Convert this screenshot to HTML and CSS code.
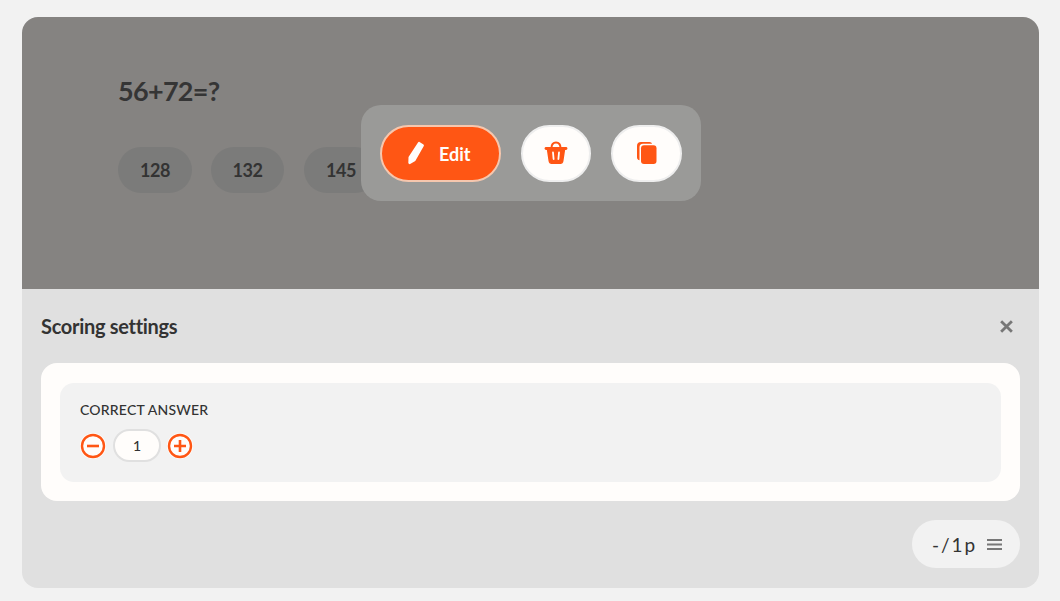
FILE: index.html
```html
<!DOCTYPE html>
<html lang="en">
<head>
    <meta charset="UTF-8">
    <title>Scoring settings</title>
    <link rel="stylesheet" href="styles.css">
</head>
<body>

    <div class="card">
        <div class="preview">
            <h1 class="question">56+72=?</h1>
            <div class="answers">
                <span class="answer a1">128</span>
                <span class="answer a2">132</span>
                <span class="answer a3">145</span>
            </div>

            <div class="toolbar">
                <button class="btn-edit">
                    <svg width="18" height="24" viewBox="0 0 18 24"><path d="M12.500 1l4 2.600c.5.400.6.900.3 1.400L8.300 20 2.700 23.200 1.300 22.300 1.500 16 11 1.500c.4-.6 1-.8 1.500-.5Z" fill="#fffdfb"/></svg>
                    <span>Edit</span>
                </button>
                <button class="btn-round">
                    <svg width="24" height="24" viewBox="0 0 24 24" fill="none" stroke="#ff5614" stroke-linecap="round" stroke-linejoin="round"><path d="M2 7.500h20" stroke-width="2.800"/><path d="M7.500 7c0-3.500 1.800-5.500 4.500-5.500S16.500 3.500 16.500 7" stroke-width="2"/><path d="M3.500 8l1.800 12c.2 1.400 1.100 2.200 2.300 2.200h8.800c1.200 0 2.100-.8 2.300-2.200L20.500 8Z" fill="#ff5614" stroke-width="1.600"/><path d="M9 11.500l.6 6.500M15 11.500l-.6 6.500" stroke="#fffdfb" stroke-width="1.800"/></svg>
                </button>
                <button class="btn-round">
                    <svg width="24" height="24" viewBox="0 0 24 24"><path d="M6 1h8.500c1.200 0 2.200.7 2.500 1.800H8c-2.300 0-3.500 1.200-3.500 3.500v13c-1.500-.3-2.500-1.300-2.500-3V5c0-2.600 1.400-4 4-4Z" fill="#ff5614"/><rect x="6" y="4.300" width="15.500" height="18.700" rx="3" fill="#ff5614"/></svg>
                </button>
            </div>
        </div>

        <div class="settings">
            <div class="settings-head">
                <h2>Scoring settings</h2>
                <svg class="close" width="15" height="15" viewBox="0 0 14 14"><path d="M2 2l10 10M12 2L2 12" stroke="#777" stroke-width="2.600"/></svg>
            </div>

            <div class="white-box">
                <div class="score-row">
                    <div class="score-label">CORRECT ANSWER</div>
                    <div class="stepper">
                        <span class="step">
                            <svg width="26" height="26" viewBox="0 0 26 26" fill="none" stroke="#ff5614" stroke-width="2.400"><circle cx="13" cy="13" r="11"/><path d="M7 13h12" stroke-width="2.600"/></svg>
                        </span>
                        <span class="count">1</span>
                        <span class="step step-plus">
                            <svg width="26" height="26" viewBox="0 0 26 26" fill="none" stroke="#ff5614" stroke-width="2.400"><circle cx="13" cy="13" r="11"/><path d="M7 13h12M13 7v12" stroke-width="2.600"/></svg>
                        </span>
                    </div>
                </div>
            </div>

            <div class="settings-foot">
                <div class="points">
                    <span class="points-text">- / 1 p</span>
                    <svg width="15" height="13" viewBox="0 0 15 13"><path d="M0 2h15M0 6.500h15M0 11h15" stroke="#777" stroke-width="2.200"/></svg>
                </div>
            </div>
        </div>
    </div>

</body>
</html>
```

FILE: styles.css
```css
* {
    box-sizing: border-box;
}
body {
    margin: 0;
    padding: 17px 21px 13px 22px;
    height: 601px;
    overflow: hidden;
    background-color: #f2f2f2;
    font-family: Lato, sans-serif;
    color: #333;
}
.card {
    height: 571px;
    border-radius: 16px;
    overflow: hidden;
    display: flex;
    flex-direction: column;
}
.preview {
    position: relative;
    height: 272px;
    padding: 57px 96px 0;
    background-color: #858381;
}
.question {
    margin: 0;
    font-size: 27px;
    line-height: 34px;
    font-weight: 700;
    letter-spacing: -0.7px;
    color: #353535;
}
.answers {
    display: flex;
    gap: 19px;
    margin-top: 39px;
}
.answer {
    display: flex;
    align-items: center;
    justify-content: center;
    height: 46px;
    border-radius: 23px;
    background-color: #7b7b7a;
    font-size: 18px;
    font-weight: 700;
    letter-spacing: -0.5px;
    color: #333;
}
.a1 {
    width: 74px;
}
.a2 {
    width: 73px;
}
.a3 {
    width: 74px;
    margin-left: 1px;
}
.toolbar {
    position: absolute;
    left: 339px;
    top: 88px;
    width: 340px;
    height: 96px;
    display: flex;
    align-items: center;
    padding: 0 19px;
    border-radius: 20px;
    background-color: #9a9a98;
}
.btn-edit {
    display: flex;
    align-items: center;
    gap: 14px;
    width: 121px;
    height: 57px;
    padding: 2px 0 0 25px;
    border: 2px solid #f6c7ae;
    border-radius: 29px;
    background-color: #ff5614;
    color: #fffdfb;
    font-family: Lato, sans-serif;
    font-size: 18px;
    font-weight: 700;
}
.btn-edit svg {
    margin-top: -2px;
}
.btn-round {
    display: flex;
    align-items: center;
    justify-content: center;
    width: 71px;
    height: 57px;
    margin-left: 20px;
    padding: 0;
    border: 2px solid #eee;
    border-radius: 29px;
    background-color: #fffdfb;
}
.settings {
    flex: 1;
    padding: 0 19px;
    background-color: #e0e0e0;
}
.settings-head {
    display: flex;
    align-items: center;
    justify-content: space-between;
    height: 74px;
}
.settings-head h2 {
    margin: 0;
    font-size: 20px;
    font-weight: 700;
    letter-spacing: -0.3px;
    color: #333;
}
.close {
    margin-right: 6px;
}
.white-box {
    padding: 20px 19px 19px;
    border-radius: 16px;
    background-color: #fffdfb;
}
.score-row {
    height: 99px;
    padding: 18px 20px 0;
    border-radius: 14px;
    background-color: #f2f2f2;
}
.score-label {
    font-size: 14px;
    line-height: 17px;
    font-weight: 500;
    letter-spacing: 0.2px;
    color: #333;
}
.stepper {
    display: flex;
    align-items: center;
    margin-top: 11px;
    margin-left: 1px;
    gap: 8px;
}
.step {
    display: flex;
    width: 26px;
    height: 26px;
    border-radius: 50%;
    background-color: #fffdfb;
    margin-right: -1px;
    margin-left: -1px;
}
.step-plus {
    margin-left: -2px;
}
.count {
    display: flex;
    align-items: center;
    justify-content: center;
    width: 48px;
    height: 33px;
    border: 2px solid #e0e0e0;
    border-radius: 17px;
    background-color: #fffdfb;
    font-size: 14px;
    font-weight: 500;
}
.settings-foot {
    display: flex;
    justify-content: flex-end;
    margin-top: 19px;
}
.points {
    display: flex;
    align-items: center;
    gap: 12px;
    width: 108px;
    height: 48px;
    padding-left: 20px;
    border-radius: 24px;
    background-color: #f2f2f2;
    font-size: 19px;
    color: #333;
}
.points-text {
    word-spacing: -1.5px;
    letter-spacing: -0.7px;
}
```
